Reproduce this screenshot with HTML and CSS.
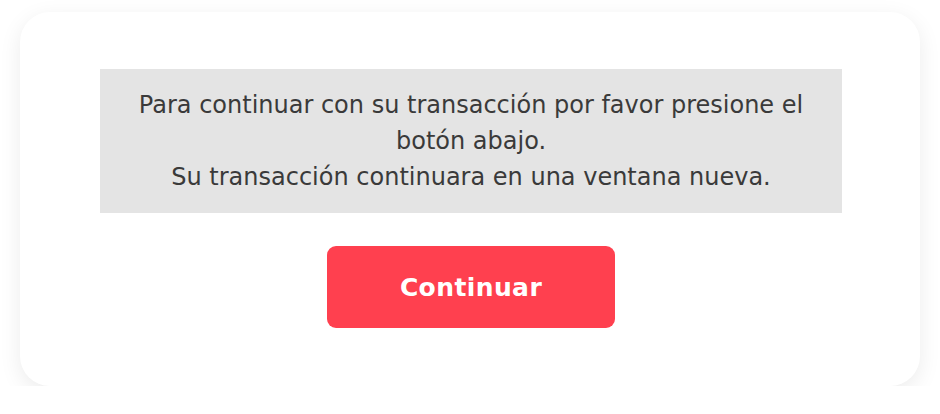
FILE: index.html
```html
<!DOCTYPE html>
<html lang="es">
<head>
<meta charset="utf-8">
<link rel="stylesheet" href="styles.css">
</head>
<body>
<div class="card">
  <div class="notice">
    <p>Para continuar con su transacción por favor presione el botón abajo.<br>Su transacción continuara en una ventana nueva.</p>
  </div>
  <button class="btn">Continuar</button>
</div>
</body>
</html>
```
FILE: styles.css
```css
html, body {
  margin: 0;
  background: #ffffff;
}
body {
  padding: 12px 20px 0 20px;
  font-family: "DejaVu Sans", "Noto Sans", sans-serif;
}
.card {
  width: 900px;
  height: 374px;
  box-sizing: border-box;
  background: #fff;
  border-radius: 30px;
  box-shadow: 0 6px 22px rgba(0,0,0,0.08);
  display: flex;
  flex-direction: column;
  align-items: center;
  padding-top: 57px;
}
.notice {
  width: 742px;
  height: 144px;
  box-sizing: border-box;
  background: #e4e4e4;
  margin-left: 2px;
  display: flex;
  align-items: center;
  justify-content: center;
  padding: 0 24px;
}
.notice p {
  margin: 0;
  text-align: center;
  font-size: 24px;
  line-height: 36px;
  color: #3a3a3a;
}
.btn {
  margin-top: 33px;
  margin-left: 2px;
  width: 288px;
  height: 82px;
  border: none;
  border-radius: 9px;
  background: #ff404f;
  color: #fff;
  font-family: "DejaVu Sans", sans-serif;
  font-weight: 700;
  font-size: 25px;
  letter-spacing: 0.4px;
}
```
